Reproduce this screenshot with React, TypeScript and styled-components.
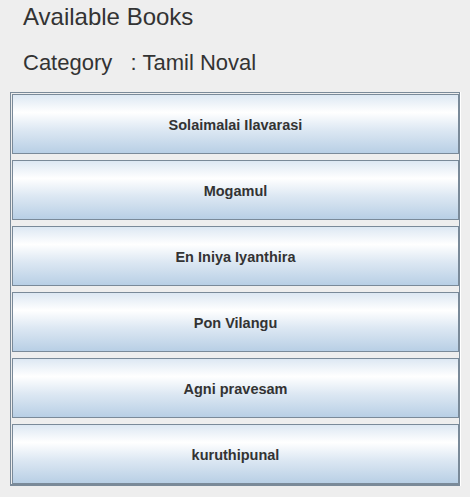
import React from "react";
import styled, { createGlobalStyle } from "styled-components";

const Global = createGlobalStyle`
  html, body { margin: 0; padding: 0; background: #eeeeee; }
  body { font-family: "Liberation Sans", Arial, sans-serif; color: #333333; }
`;

const Page = styled.div`
  width: 470px;
  height: 497px;
  background: #eeeeee;
  overflow: hidden;
  display: flex;
  flex-direction: column;
`;

const Title = styled.div`
  margin: 3px 0 0 23px;
  font-size: 24px;
  line-height: 28px;
  color: #333333;
  white-space: pre;
`;

const Category = styled.div`
  margin: 19px 0 0 23px;
  font-size: 22px;
  line-height: 26px;
  color: #333333;
  white-space: pre;
`;

const Panel = styled.div`
  margin: 16px 0 0 10px;
  width: 450px;
  box-sizing: border-box;
  border: 1px solid #7a8a99;
  border-bottom-width: 2px;
  box-shadow: 1px 0 0 #ffffff;
  padding: 1px 0 0 1px;
  display: flex;
  flex-direction: column;
  gap: 6px;
`;

const BookButton = styled.button`
  width: 447px;
  height: 60px;
  box-sizing: border-box;
  border: 1px solid #7a8a99;
  margin: 0;
  padding: 2px 0 0 0;
  background: linear-gradient(
    to bottom,
    #dde8f3 0%,
    #ffffff 30%,
    #dde8f3 60%,
    #b8cfe5 100%
  );
  font-family: "Liberation Sans", Arial, sans-serif;
  font-weight: bold;
  font-size: 14.5px;
  color: #333333;
  display: flex;
  align-items: center;
  justify-content: center;
  cursor: pointer;
`;

const books = [
  "Solaimalai Ilavarasi",
  "Mogamul",
  "En Iniya Iyanthira",
  "Pon Vilangu",
  "Agni pravesam",
  "kuruthipunal",
];

export default function App() {
  return (
    <Page>
      <Global />
      <Title>Available Books</Title>
      <Category>{"Category   : Tamil Noval"}</Category>
      <Panel>
        {books.map((b) => (
          <BookButton key={b}>{b}</BookButton>
        ))}
      </Panel>
    </Page>
  );
}
